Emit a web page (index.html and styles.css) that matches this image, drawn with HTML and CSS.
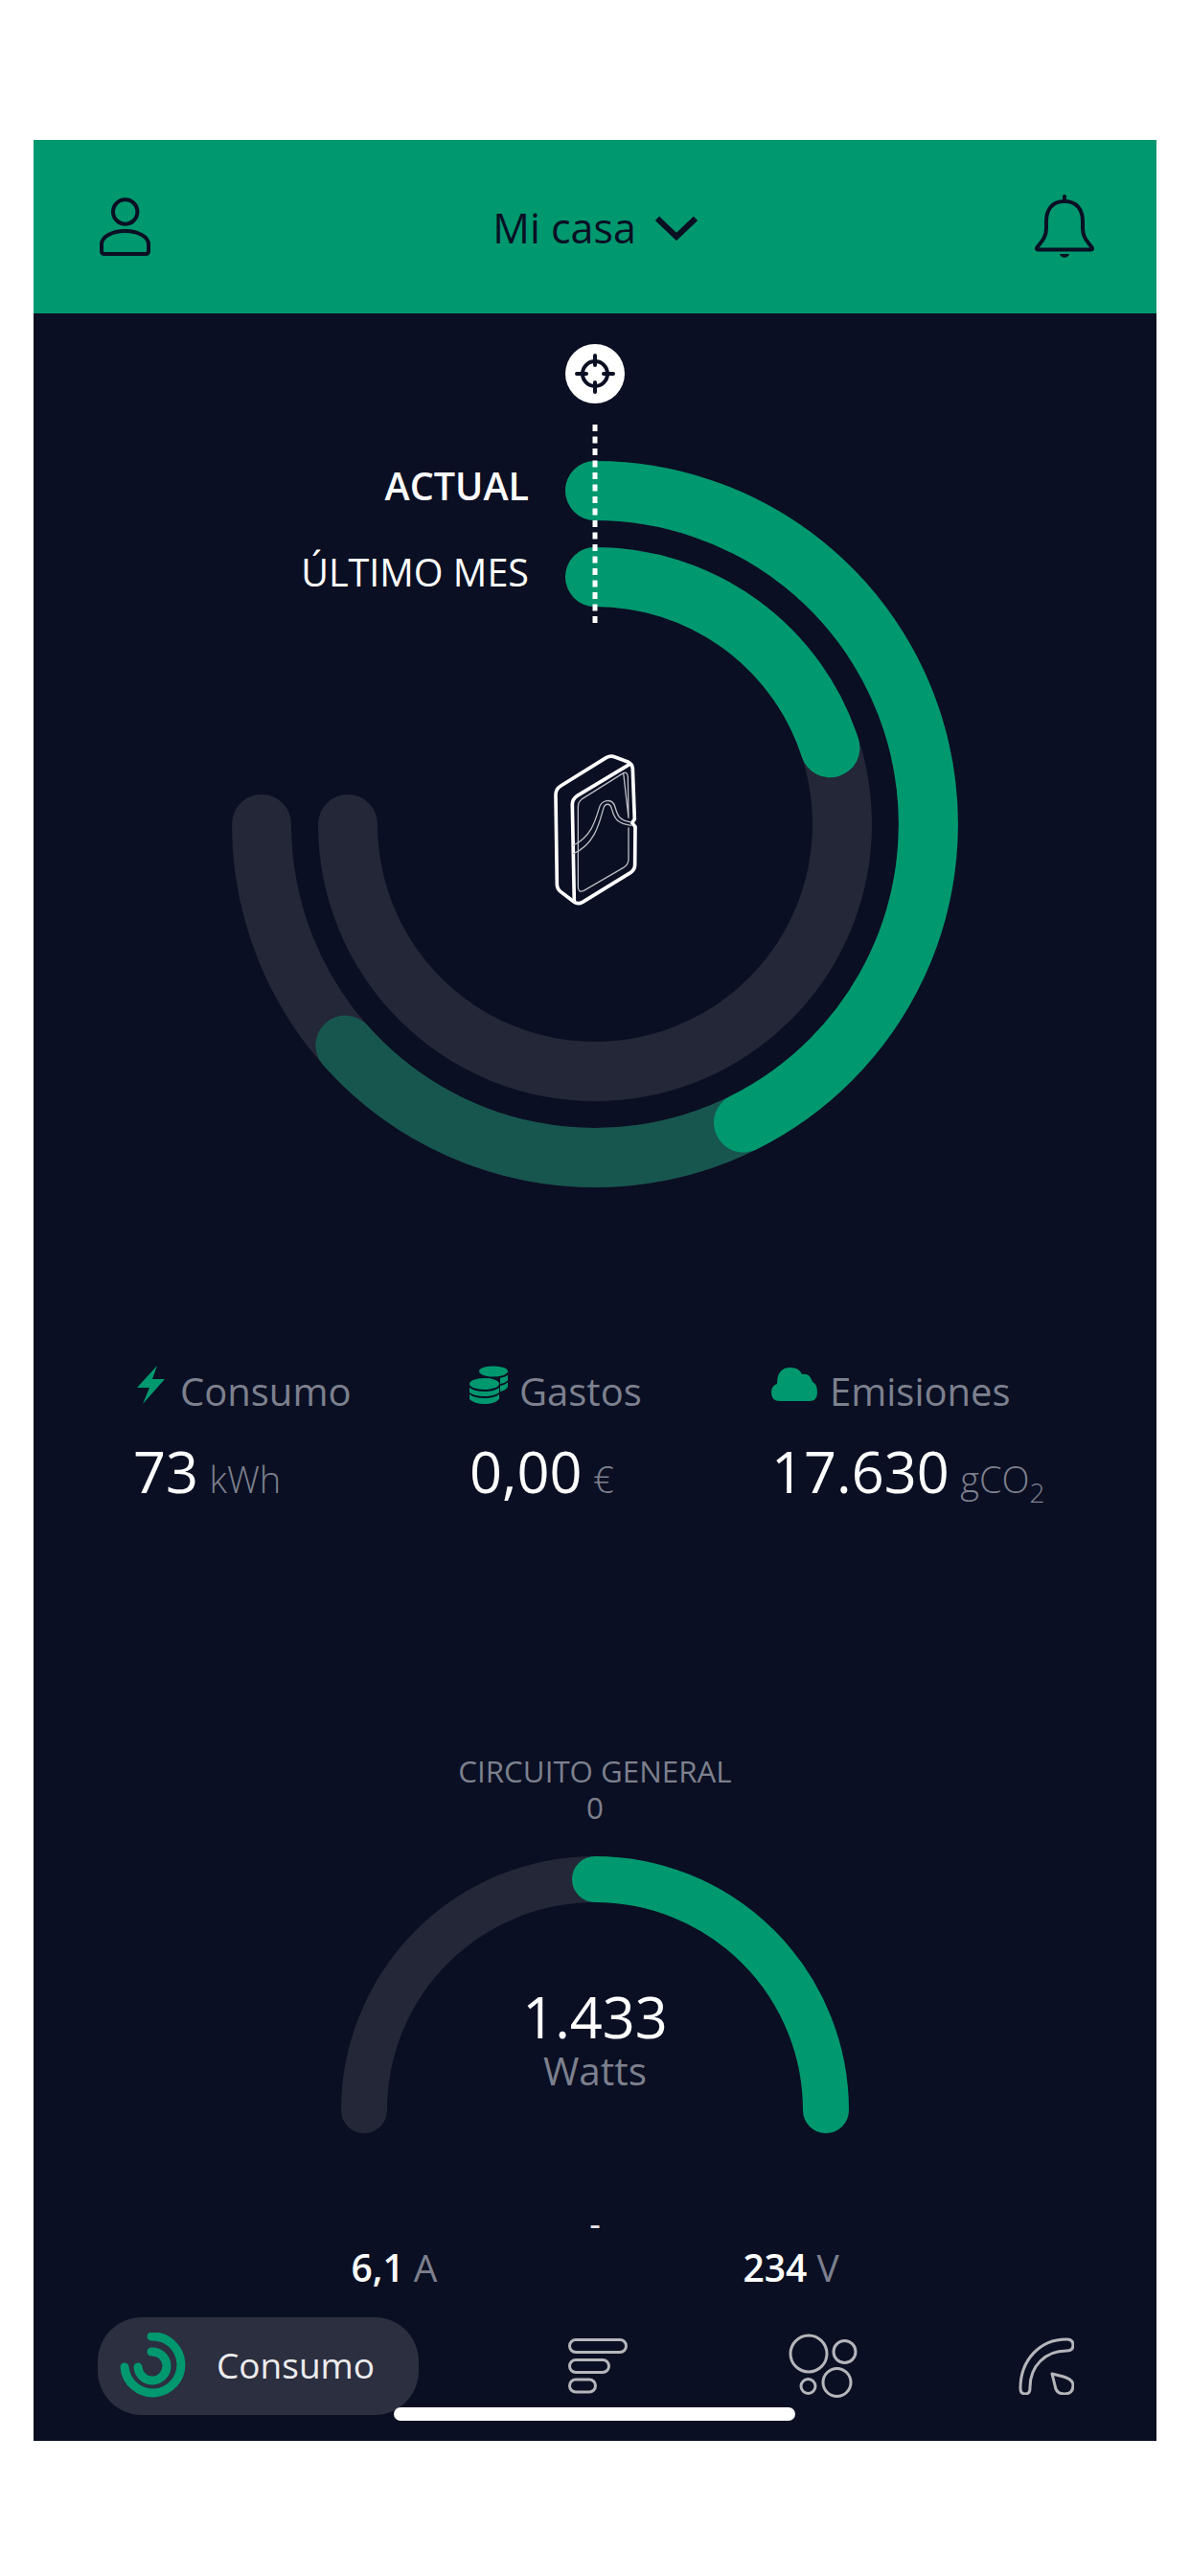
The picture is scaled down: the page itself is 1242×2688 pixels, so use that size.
FILE: index.html
```html
<!DOCTYPE html>
<html lang="es">
<head>
<meta charset="utf-8">
<title>Mi casa</title>
<link rel="stylesheet" href="styles.css">
</head>
<body>
<main class="screen">
  <header class="topbar">
    <svg class="top-icon user" viewBox="0 0 55 62" aria-hidden="true">
      <circle class="ink" cx="27.7" cy="15" r="12.7"/>
      <path class="ink" d="M6 59 Q3 59 3 56 L3 49 C3 41 14 35 27.5 35 C41 35 52 41 52 49 L52 56 Q52 59 49 59 Z"/>
    </svg>
    <div class="place">
      <span>Mi casa</span>
      <svg class="chevron" viewBox="0 0 44 26" aria-hidden="true"><path class="ink chev" d="M2 3 L22 22 L42 3"/></svg>
    </div>
    <svg class="top-icon bell" viewBox="0 0 62 68" aria-hidden="true">
      <path class="ink" d="M31 7 C18 7 12 16 12 28 L12 35 C12 44 8 48 2.5 55 Q1 57.5 4 57.5 L58 57.5 Q61 57.5 59.5 55 C54 48 50 44 50 35 L50 28 C50 16 44 7 31 7 Z"/>
      <path class="ink" d="M31 2 L31 7"/>
      <path class="fillink" d="M26 62 L36 62 C35 67 27 67 26 62 Z"/>
    </svg>
  </header>

  <section class="rings">
    <svg class="rings-art" viewBox="35 327 1172 920" aria-hidden="true">
      <path class="arc track" d="M621 512 A348 348 0 1 1 273 860"/>
      <path class="arc track" d="M621 602 A258 258 0 1 1 363 860"/>
      <path class="arc faded" d="M776 1171.5 A348 348 0 0 1 360.4 1090.6"/>
      <path class="arc green" d="M621 512 A348 348 0 0 1 776 1171.5"/>
      <path class="arc green" d="M621 602 A258 258 0 0 1 866.4 780.3"/>
      <line class="dots" x1="621" y1="443" x2="621" y2="655"/>
      <circle class="target-bg" cx="621" cy="390" r="31"/>
      <circle class="target" cx="621" cy="390" r="13"/>
      <path class="target" d="M621 371 V381 M621 399 V409 M602 390 H612 M630 390 H640"/>
      <g transform="translate(520 760) scale(0.3333)">
        <path class="dev" d="M338 92 Q352 84 366 90 L408 106 Q420 112 421 126 L427 284 L419 296 L429 308 L428 428 Q427 444 414 452 L264 544 Q250 552 238 544 L196 512 Q184 502 184 488 L180 208 Q180 190 196 180 Z"/>
        <path class="dev" d="M412 112 L246 212 Q232 222 232 238 L238 542"/>
        <path class="dev-thin" d="M392 140 L264 220 Q250 230 250 246 L250 496 Q250 516 268 508 L392 436 Q408 426 408 410 L408 312 M408 280 L406 152 Q404 134 392 140 Z"/>
        <path class="dev-thin" d="M236 366 C290 340 304 290 316 250 C322 226 356 214 366 246 C374 276 380 288 416 294"/>
        <path class="dev-thin" d="M236 392 C300 364 316 300 328 256 C332 234 350 230 356 254 C364 284 374 298 416 304"/>
      </g>
    </svg>
    <div class="series series-now">ACTUAL</div>
    <div class="series series-last">ÚLTIMO MES</div>
  </section>

  <section class="stats">
    <div class="stat">
      <div class="stat-label">
        <svg class="stat-icon bolt" viewBox="0 0 30 40" aria-hidden="true"><path class="solid" d="M21 0 L0 23 L13 23 L6 40 L29 14 L16 14 Z"/></svg>
        <span>Consumo</span>
      </div>
      <div class="stat-value">73 <small>kWh</small></div>
    </div>
    <div class="stat">
      <div class="stat-label">
        <svg class="stat-icon coins" viewBox="0 0 40 40" aria-hidden="true">
          <ellipse class="solid" cx="25" cy="6" rx="15" ry="5.5"/>
          <path class="solid" d="M32 13 Q37 12 40 10 L40 15 Q38 18 32 19 Z M32 21 Q37 20 40 17.5 L40 22 Q38 26 32 27 Z"/>
          <ellipse class="solid" cx="15.5" cy="19" rx="15.5" ry="6"/>
          <path class="solid" d="M0 23 Q5 27 15.5 27 Q26 27 31 23 L31 28 Q26 32 15.5 32 Q5 32 0 28 Z M0 30 Q5 34 15.5 34 Q26 34 31 30 L31 35 Q26 40 15.5 40 Q5 40 0 35 Z"/>
        </svg>
        <span>Gastos</span>
      </div>
      <div class="stat-value">0,00 <small>€</small></div>
    </div>
    <div class="stat">
      <div class="stat-label">
        <svg class="stat-icon cloud" viewBox="0 0 48 35" aria-hidden="true"><path class="solid" d="M9 35 Q0 35 0 26 Q0 19 6 17 Q6 0 20 0 Q29 0 32 7 Q40 5 43 15 Q48 17 48 26 Q48 35 40 35 Z"/></svg>
        <span>Emisiones</span>
      </div>
      <div class="stat-value">17.630 <small>gCO<sub>2</sub></small></div>
    </div>
  </section>

  <section class="circuit">
    <div class="circuit-name">CIRCUITO GENERAL</div>
    <div class="circuit-index">0</div>
    <div class="gauge">
      <svg class="gauge-art" viewBox="356 1938 530 290" aria-hidden="true">
        <path class="gauge-arc gauge-track" d="M380 2203 A241 241 0 0 1 621 1962"/>
        <path class="gauge-arc green-stroke" d="M621 1962 A241 241 0 0 1 862 2203"/>
      </svg>
      <div class="gauge-text">
        <div class="gauge-value">1.433</div>
        <div class="gauge-unit">Watts</div>
      </div>
    </div>
    <div class="dash">-</div>
    <div class="readings">
      <div class="reading"><b>6,1</b> A</div>
      <div class="reading"><b>234</b> V</div>
    </div>
  </section>

  <nav class="tabs">
    <div class="pill">
      <svg class="pill-icon" viewBox="0 0 70 70" aria-hidden="true">
        <path class="pill-ring" d="M33 4 A29.5 29.5 0 1 1 5 36"/>
        <path class="pill-ring" d="M33 20 A15 15 0 1 1 19 36"/>
      </svg>
      <span class="pill-label">Consumo</span>
    </div>
    <svg class="tab-icon tab-bars" viewBox="0 0 62 58" aria-hidden="true">
      <rect class="line" x="1.5" y="1.5" width="59" height="13" rx="6.5"/>
      <rect class="line" x="1.5" y="22.5" width="41" height="13" rx="6.5"/>
      <rect class="line" x="1.5" y="43" width="27" height="13" rx="6.5"/>
    </svg>
    <svg class="tab-icon tab-bubbles" viewBox="0 0 72 68" aria-hidden="true">
      <circle class="line" cx="21" cy="21" r="19"/>
      <circle class="line" cx="58.5" cy="19" r="11.5"/>
      <circle class="line" cx="50.5" cy="51" r="14.5"/>
      <circle class="line" cx="20.5" cy="55" r="7.5"/>
    </svg>
    <svg class="tab-icon tab-meter" viewBox="0 0 58 60" aria-hidden="true">
      <path class="line" d="M12 52 L12 53 Q12 59 7 59 Q2 59 2 53 C2 24 22 2 50 2 Q57 2 57 8 Q57 14 50 14 C28 14 12 30 12 52 Z"/>
      <path class="line" d="M35 38 L47 41 Q57 44 57 50 Q57 59 48 59 Q39 59 38 50 Z"/>
    </svg>
  </nav>
  <div class="home-bar"></div>
</main>
</body>
</html>
```

FILE: styles.css
```css
* { box-sizing: border-box; }
html, body { margin: 0; padding: 0; background: #fff; }
body { font-family: "Open Sans", "Noto Sans", sans-serif; height: 2688px; overflow: hidden; }

.screen {
  position: relative;
  width: 1172px;
  height: 2401px;
  margin: 146px 0 0 35px;
  background: #0a0f23;
  color: #fff;
  overflow: hidden;
}

/* Top bar */
.topbar {
  height: 181px;
  background: #00986f;
  display: grid;
  grid-template-columns: 1fr auto 1fr;
  align-items: center;
  padding: 0 66px;
  color: #0a0f23;
}
.top-icon { display: block; }
.user { width: 55px; height: 62px; justify-self: start; margin-left: 2px; }
.bell { width: 62px; height: 68px; justify-self: end; margin-right: -1px; }
.place { display: flex; align-items: center; gap: 20px; font-size: 43px; line-height: 54px; margin-top: 3px; }
.chevron { width: 44px; height: 26px; display: block; }
.ink { fill: none; stroke: #0a0f23; stroke-width: 4; stroke-linejoin: round; stroke-linecap: round; }
.chev { stroke-width: 6; stroke-linecap: butt; stroke-linejoin: miter; }
.fillink { fill: #0a0f23; }

/* Rings */
.rings { position: relative; height: 920px; }
.rings-art { display: block; width: 1172px; height: 920px; }
.arc { fill: none; stroke-width: 62; stroke-linecap: round; }
.track { stroke: #242738; }
.faded { stroke: #17564f; }
.green { stroke: #00986f; }
.dots { stroke: #fff; stroke-width: 5; stroke-dasharray: 7 5.5; }
.target-bg { fill: #fff; }
.target { fill: none; stroke: #0a0f23; stroke-width: 4; stroke-linecap: round; }
.dev { fill: none; stroke: #fff; stroke-width: 11; stroke-linejoin: round; stroke-linecap: round; }
.dev-thin { fill: none; stroke: #b9bbc2; stroke-width: 4; stroke-linejoin: round; stroke-linecap: round; }
.series {
  position: absolute;
  right: 655px;
  font-size: 39.5px;
  line-height: 50px;
  white-space: nowrap;
}
.series-now { top: 155px; font-weight: 600; }
.series-last { top: 245px; }

/* Stats */
.stats {
  display: grid;
  grid-template-columns: 351px 315px 1fr;
  padding-left: 104px;
  margin-top: 178px;
}
.stat-label {
  display: flex;
  align-items: flex-start;
  color: #7d808e;
  font-size: 40px;
  line-height: 54px;
  height: 54px;
}
.stat-icon { display: block; flex: none; }
.bolt { width: 30px; height: 40px; margin: 0 15px 0 4px; }
.coins { width: 40px; height: 40px; margin: 0 12px 0 0; }
.cloud { width: 48px; height: 35px; margin: 2px 13px 0 0; }
.solid { fill: #00986f; }
.stat-value { font-size: 59.5px; line-height: 80px; margin-top: 16px; white-space: nowrap; }
.stat-value small { font-size: 38px; font-weight: 300; color: #7d808e; margin-left: -4px; }
.stat-value sub { font-size: 28px; line-height: 0; vertical-align: -10px; }

/* Circuit gauge */
.circuit { margin-top: 246px; display: flex; flex-direction: column; align-items: center; }
.circuit-name, .circuit-index { font-size: 31.3px; line-height: 38px; color: #7d808e; }
.gauge { display: grid; width: 530px; margin-top: 32px; }
.gauge > * { grid-area: 1 / 1; }
.gauge-art { display: block; width: 530px; height: 290px; }
.gauge-arc { fill: none; stroke-width: 48; stroke-linecap: round; }
.gauge-track { stroke: #242738; }
.green-stroke { stroke: #00986f; }
.gauge-text { display: flex; flex-direction: column; align-items: center; padding-top: 134px; }
.gauge-value { font-size: 59.5px; line-height: 66px; }
.gauge-unit { font-size: 40.5px; line-height: 48px; color: #7d808e; }
.dash { font-size: 36px; line-height: 40px; margin-top: 74px; color: #e6e7eb; }
.readings { display: grid; grid-template-columns: 409px 100px; margin-top: -1px; width: 509px; }
.reading { font-size: 39px; line-height: 52px; color: #7d808e; white-space: nowrap; }
.reading b { color: #fff; font-weight: 600; }

/* Tabs */
.tabs {
  display: flex;
  align-items: center;
  gap: 168px;
  padding-left: 67px;
  margin-top: 26px;
}
.pill {
  width: 335px;
  height: 102px;
  margin-right: -12px;
  border-radius: 46px;
  background: #2c2f40;
  display: flex;
  align-items: center;
  gap: 31px;
  padding-left: 23px;
  font-size: 37px;
  color: #ececee;
}
.pill-label { padding-bottom: 3px; }
.pill-icon { width: 70px; height: 70px; display: block; flex: none; }
.pill-ring { fill: none; stroke: #00986f; stroke-width: 9; stroke-linecap: round; }
.tab-icon { display: block; flex: none; }
.tab-bars { width: 62px; height: 58px; }
.tab-bubbles { width: 72px; height: 68px; }
.tab-meter { width: 58px; height: 60px; }
.line { fill: none; stroke: #b5b6bb; stroke-width: 3; stroke-linejoin: round; }

.home-bar {
  position: absolute;
  left: 376px;
  top: 2366px;
  width: 419px;
  height: 14px;
  border-radius: 7px;
  background: #fff;
}
```
